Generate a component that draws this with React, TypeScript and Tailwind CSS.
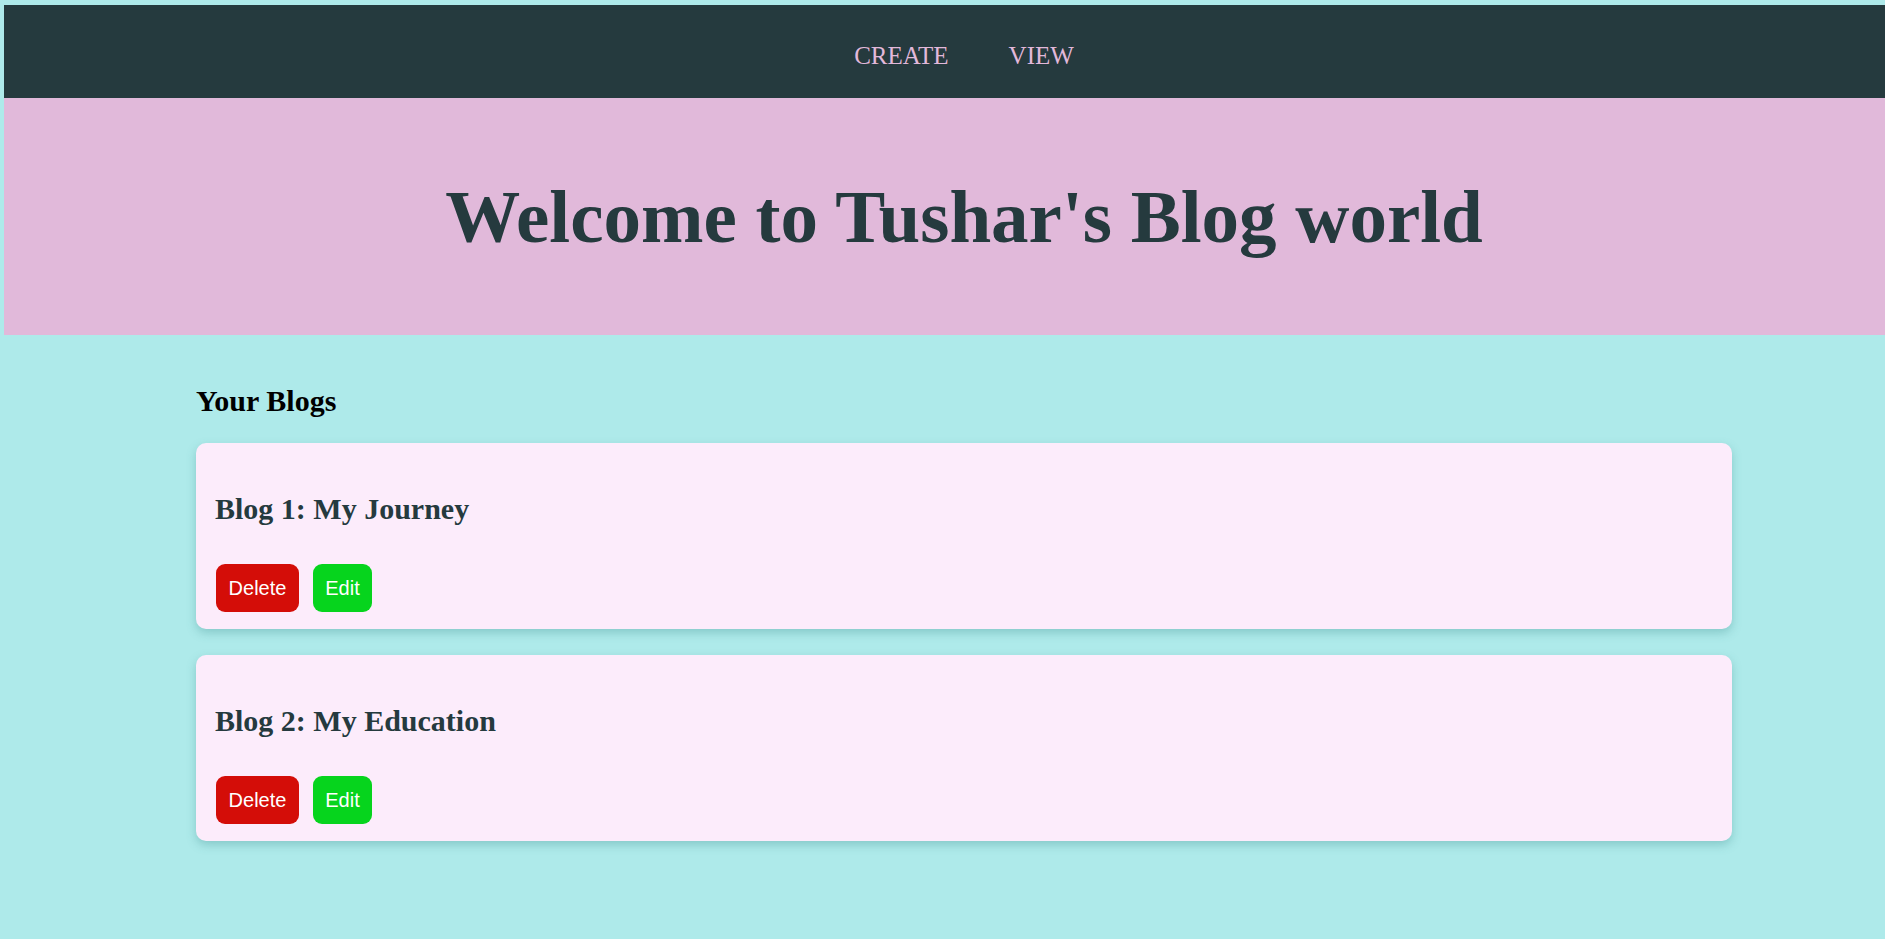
const blogs = [
  { id: 1, title: "Blog 1: My Journey" },
  { id: 2, title: "Blog 2: My Education" },
];

function BlogCard({ title }: { title: string }) {
  return (
    <article className="h-[186px] rounded-[10px] bg-[#fcecfb] px-[19px] pt-[49px] shadow-[0_4px_10px_rgba(60,140,140,0.35)]">
      <h2 className="text-[30px] font-bold leading-[34px] text-[#253a3e]">{title}</h2>
      <div className="ml-[1px] mt-[38px] flex gap-[14px] font-['Liberation_Sans',Arial,sans-serif]">
        <button className="h-[48px] w-[83px] rounded-[9px] bg-[#d40d08] text-[20px] text-white">Delete</button>
        <button className="h-[48px] w-[59px] rounded-[9px] bg-[#06d41d] text-[20px] text-white">Edit</button>
      </div>
    </article>
  );
}

export default function App() {
  return (
    <div className="min-h-screen overflow-hidden bg-[#aeeaea] pt-[5px] font-['Liberation_Serif','Times_New_Roman',serif]">
      <div className="ml-[4px] w-[1920px]">
        <nav className="flex h-[93px] justify-center gap-[60px] bg-[#253a3e] pt-[36px] text-[25px] leading-[29px] text-[#e2b8da]">
          <a href="#">CREATE</a>
          <a href="#">VIEW</a>
        </nav>
        <header className="flex h-[237px] items-center justify-center bg-[#e1b9da]">
          <h1 className="text-[75px] font-bold leading-[86px] text-[#253a3e]">Welcome to Tushar's Blog world</h1>
        </header>
        <main className="mx-auto w-[1536px] pt-[49px]">
          <h2 className="text-[30px] font-bold leading-[34px] text-black">Your Blogs</h2>
          <div className="mt-[25px] flex flex-col gap-[26px]">
            {blogs.map((b) => (
              <BlogCard key={b.id} title={b.title} />
            ))}
          </div>
        </main>
      </div>
    </div>
  );
}
